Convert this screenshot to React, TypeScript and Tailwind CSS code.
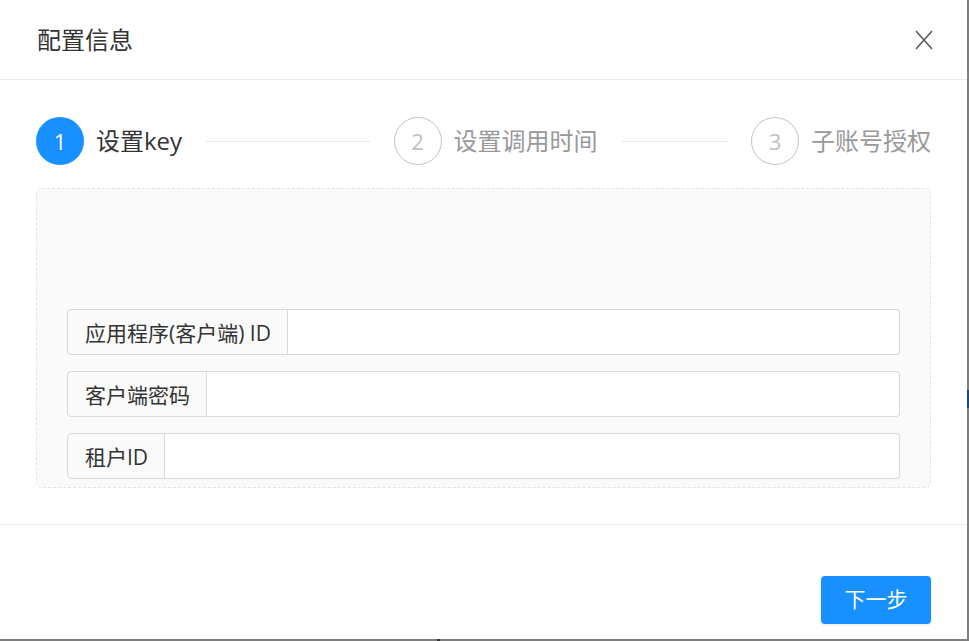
import React from "react";

const font = { fontFamily: '"Open Sans", "Noto Sans CJK SC", sans-serif' };

type Step = { n: number; title: string };

const steps: Step[] = [
  { n: 1, title: "设置key" },
  { n: 2, title: "设置调用时间" },
  { n: 3, title: "子账号授权" },
];

const fields = ["应用程序(客户端) ID", "客户端密码", "租户ID"];

function StepItem({ step, active, last }: { step: Step; active: boolean; last: boolean }) {
  return (
    <div className={last ? "flex flex-none items-center" : "flex min-w-0 flex-1 basis-0 items-center"}>
      <div
        className={
          active
            ? "flex h-12 w-12 flex-none items-center justify-center rounded-full bg-[#1890ff] text-[22px] text-white"
            : "flex h-12 w-12 flex-none items-center justify-center rounded-full border border-[#c4c4c4] text-[22px] text-[#bfbfbf]"
        }
      >
        {step.n}
      </div>
      <div
        className={
          active
            ? "ml-[12px] whitespace-nowrap text-[24px] leading-none text-[#333333]"
            : "ml-[12px] whitespace-nowrap text-[24px] leading-none text-[#999999]"
        }
      >
        {step.title}
      </div>
      {!last && <div className="mx-6 h-px flex-1 bg-[#e8e8e8]" />}
    </div>
  );
}

function Field({ label }: { label: string }) {
  return (
    <div className="flex h-[46px] w-full">
      <div className="flex flex-none items-center rounded-l-[4px] border border-[#d9d9d9] bg-[#fafafa] pl-[17px] pr-[16px] pt-[3px] text-[21px] text-[#333333]">
        {label}
      </div>
      <div className="flex-1 rounded-r-[4px] border border-l-0 border-[#d9d9d9] bg-white" />
    </div>
  );
}

export default function App() {
  return (
    <div className="relative h-[641px] w-[969px] overflow-hidden bg-[#7f7f7f]" style={font}>
      <div className="flex h-[639px] w-[967px] flex-col bg-white">
        <div className="flex h-[80px] flex-none items-center justify-between border-b border-[#ebebeb] pl-[37px] pr-[34px]">
          <div className="text-[24px] leading-none text-[#333333]">配置信息</div>
          <svg width="18" height="20" viewBox="0 0 18 20" className="text-[#555555]">
            <path d="M1 1 L17 19 M17 1 L1 19" stroke="currentColor" strokeWidth="1.5" fill="none" />
          </svg>
        </div>

        <div className="flex flex-col px-[36px] pt-[37px]">
          <div className="flex items-center">
            {steps.map((s, i) => (
              <StepItem key={s.n} step={s} active={i === 0} last={i === steps.length - 1} />
            ))}
          </div>

          <div className="mt-[23px] flex h-[300px] flex-col justify-end gap-4 rounded-[6px] border border-dashed border-[#e3e3e3] bg-[#fafafa] px-[30px] pb-[8px]">
            {fields.map((f) => (
              <Field key={f} label={f} />
            ))}
          </div>
        </div>

        <div className="mt-[36px] flex flex-1 items-end justify-end border-t border-[#ebebeb] pb-[15px] pr-[36px]">
          <button className="h-[48px] w-[110px] rounded-[4px] bg-[#1890ff] text-[21px] text-white shadow-[0_2px_0_rgba(0,0,0,0.05)]">
            下一步
          </button>
        </div>
      </div>
      <div className="absolute right-0 top-[390px] h-[18px] w-[2px] bg-[#1c4a78]" />
      <div className="absolute bottom-0 left-[437px] h-[2px] w-[3px] bg-[#333333]" />
    </div>
  );
}
